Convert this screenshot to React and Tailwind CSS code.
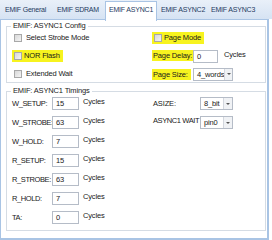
import { useState } from "react";

const tabs = [
  { name: "EMIF General", w: "w-[54px] pl-[5px]" },
  { name: "EMIF SDRAM", w: "w-[51px] pl-[3px]" },
  { name: "EMIF ASYNC1", w: "w-[52px] pl-[3px]" },
  { name: "EMIF ASYNC2", w: "w-[51px] pl-[4px]" },
  { name: "EMIF ASYNC3", w: "w-[55px] pl-[3px]" },
];

const timings = [
  { label: "W_SETUP:", value: "15" },
  { label: "W_STROBE:", value: "63" },
  { label: "W_HOLD:", value: "7" },
  { label: "R_SETUP:", value: "15" },
  { label: "R_STROBE:", value: "63" },
  { label: "R_HOLD:", value: "7" },
  { label: "TA:", value: "0" },
];

const Check = () => (
  <span className="w-[8px] h-[8px] border border-[#a8a8a8] bg-gradient-to-br from-[#d8d8d8] to-[#f4f4f4] shrink-0" />
);

const TextBox = ({ value, w = "w-[27px]" }) => (
  <div className={`${w} h-[13px] border border-[#b5bcc7] bg-white pl-[3px] leading-[11px] shrink-0`}>
    {value}
  </div>
);

const Combo = ({ value, w }) => (
  <div className={`${w} h-[13px] border border-[#b5bcc7] bg-white flex shrink-0`}>
    <span className="flex-1 pl-[3px] leading-[11px]">{value}</span>
    <span className="w-[9px] border-l border-[#d3d7de] bg-[#f0f2f5] flex items-center justify-center">
      <span className="w-0 h-0 border-l-[2px] border-r-[2px] border-t-[2px] border-l-transparent border-r-transparent border-t-[#555]" />
    </span>
  </div>
);

const GroupBox = ({ title, className, children }) => (
  <fieldset className={`border border-[#d5dce4] ${className}`}>
    <legend className="ml-[4px] px-[2px] leading-[10px] text-[#222]">{title}</legend>
    {children}
  </fieldset>
);

export default function App() {
  const [active] = useState("EMIF ASYNC1");

  return (
    <div
      className="w-[272px] h-[240px] bg-white text-[7.5px] text-[#1a1a1a] flex flex-col overflow-hidden whitespace-nowrap tracking-[-0.15px]"
      style={{ fontFamily: '"Liberation Sans", Arial, sans-serif' }}
    >
      {/* Tabs */}
      <div className="h-[19px] flex bg-gradient-to-b from-[#e9f0f9] to-[#d6e3f3] shrink-0 text-[7px] tracking-[-0.2px]">
        {tabs.map((t) =>
          t.name === active ? (
            <div
              key={t.name}
              className={`${t.w} h-[20px] mt-[1px] bg-white border border-b-0 border-[#a9c4e4] text-[#1e3a60] leading-[16px] relative z-10`}
            >
              {t.name}
            </div>
          ) : (
            <div key={t.name} className={`${t.w} text-[#1e3a60] leading-[18px] pt-[1px]`}>
              {t.name}
            </div>
          )
        )}
        <div className="flex-1" />
      </div>

      {/* Page */}
      <div className="w-[269px] flex-1 border border-[#a9c4e4] border-r-[2px] border-b-[2px] bg-white px-[5px]">
        <GroupBox title="EMIF: ASYNC1 Config" className="w-[260px] mt-[1px] pb-[1px]">
          <div className="grid grid-cols-[138px_1fr] pl-[7px]">
            <div className="flex flex-col gap-[4px]">
              <div className="h-[14px] flex items-center gap-[4px]">
                <Check />
                <span>Select Strobe Mode</span>
              </div>
              <div className="h-[14px] flex items-center">
                <div className="h-[12px] flex items-center gap-[2px] bg-[#f7f31f] -ml-[2px] pl-[2px] pr-[3px]">
                  <Check />
                  <span>NOR Flash</span>
                </div>
              </div>
              <div className="h-[14px] flex items-center gap-[4px]">
                <Check />
                <span>Extended Wait</span>
              </div>
            </div>
            <div className="flex flex-col gap-[4px]">
              <div className="h-[14px] flex items-center">
                <div className="h-[12px] flex items-center gap-[2px] bg-[#f7f31f] pl-[2px] pr-[3px]">
                  <Check />
                  <span>Page Mode</span>
                </div>
              </div>
              <div className="h-[14px] flex items-center">
                <div className="w-[41px]">
                  <span className="bg-[#f7f31f] px-[1px] leading-[11px] inline-block">Page Delay:</span>
                </div>
                <TextBox value="0" w="w-[25px]" />
                <span className="ml-[6px] self-start leading-[11px]">Cycles</span>
              </div>
              <div className="h-[14px] flex items-center">
                <div className="w-[41px] pr-[2px]">
                  <div className="bg-[#f7f31f] px-[1px] leading-[11px]">Page Size:</div>
                </div>
                <Combo value="4_words" w="w-[40px]" />
              </div>
            </div>
          </div>
        </GroupBox>

        <GroupBox title="EMIF: ASYNC1 Timings" className="w-[260px] mt-[3px] pb-[5px]">
          <div className="grid grid-cols-[141px_1fr] pl-[5px]">
            <div className="flex flex-col gap-[4px]">
              {timings.map((t) => (
                <div key={t.label} className="h-[15px] flex items-center">
                  <span className="w-[40px] tracking-[-0.4px]">{t.label}</span>
                  <TextBox value={t.value} />
                  <span className="ml-[4px] self-start leading-[11px]">Cycles</span>
                </div>
              ))}
            </div>
            <div className="flex flex-col gap-[4px]">
              <div className="h-[15px] flex items-center">
                <span className="w-[47px]">ASIZE:</span>
                <Combo value="8_bit" w="w-[33px]" />
              </div>
              <div className="h-[15px] flex items-center">
                <span className="w-[47px] self-start leading-[11px] tracking-[-0.4px]">ASYNC1 WAIT</span>
                <Combo value="pin0" w="w-[33px]" />
              </div>
            </div>
          </div>
        </GroupBox>
      </div>
    </div>
  );
}
